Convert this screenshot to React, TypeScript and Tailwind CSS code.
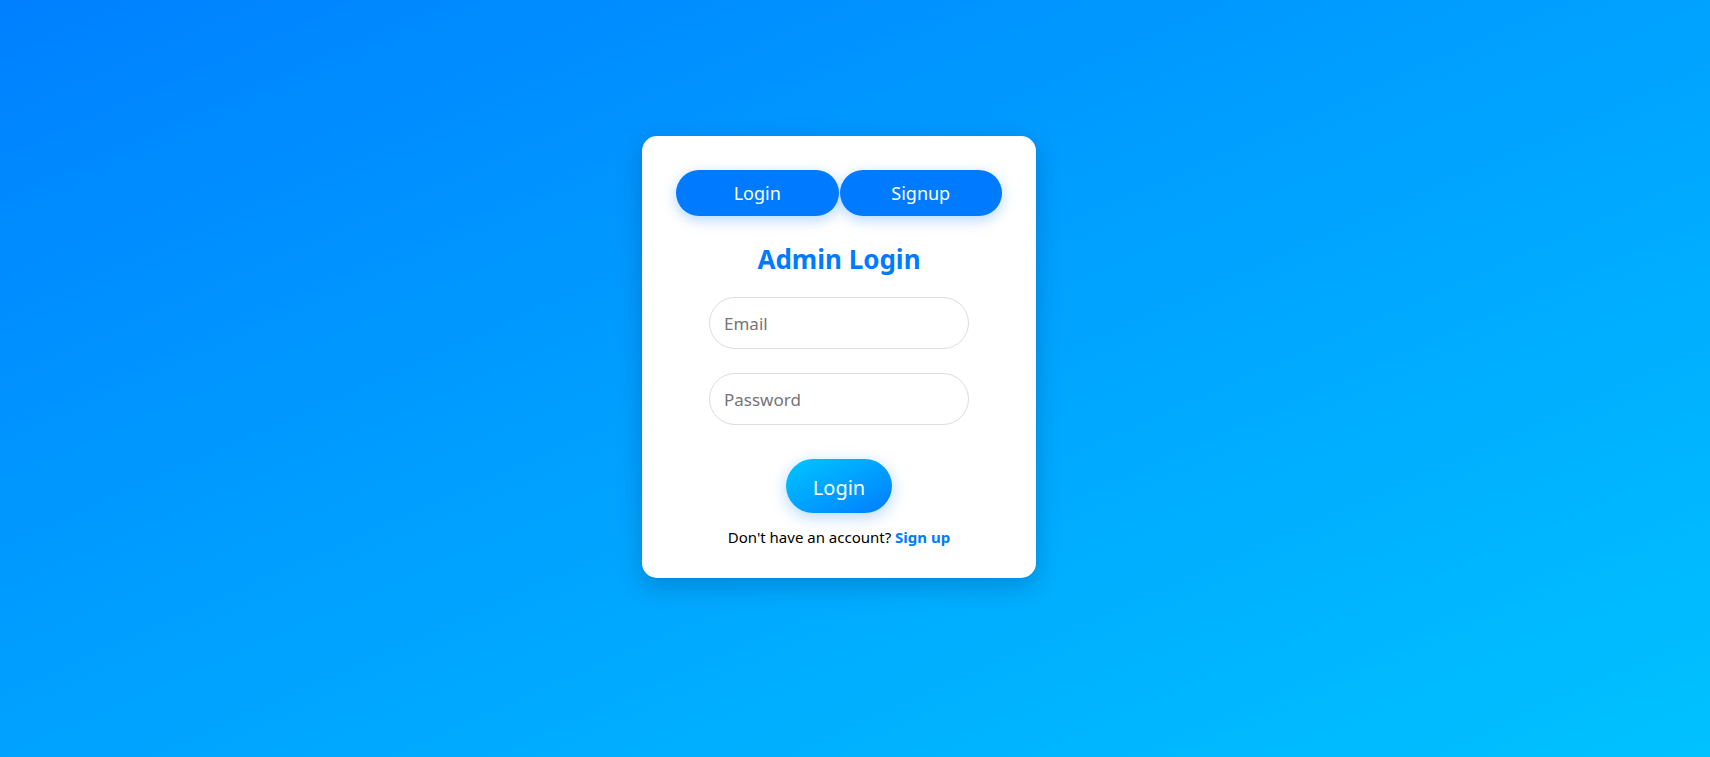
export default function App() {
  return (
    <div
      className="min-h-screen w-full flex items-center justify-center bg-gradient-to-br from-[#0080ff] to-[#00c2ff] pr-[32px] pb-[43px]"
      style={{ fontFamily: '"Noto Sans", "Open Sans", sans-serif' }}
    >
      {/* card */}
      <div className="w-[394px] h-[442px] bg-white rounded-[15px] shadow-[0_8px_24px_rgba(0,40,90,0.25)] px-[34px] pt-[34px] flex flex-col items-center">
        <div className="flex w-full">
          <button className="flex-1 h-[46px] rounded-full bg-[#007bff] text-white text-[18px] shadow-[0_4px_14px_rgba(0,123,255,0.3)]">
            Login
          </button>
          <button className="flex-1 h-[46px] rounded-full bg-[#007bff] text-white text-[18px] shadow-[0_4px_14px_rgba(0,123,255,0.3)] ml-px">
            Signup
          </button>
        </div>

        <h2 className="mt-[23px] text-[26px] leading-[40px] font-bold text-[#007bff]">Admin Login</h2>

        <input
          type="email"
          placeholder="Email"
          className="mt-[18px] w-[260px] h-[52px] rounded-full border border-[#dddddd] px-[14px] text-[17px] placeholder:text-[#757575] outline-none"
        />
        <input
          type="password"
          placeholder="Password"
          className="mt-[24px] w-[260px] h-[52px] rounded-full border border-[#dddddd] px-[14px] text-[17px] placeholder:text-[#757575] outline-none"
        />

        <button className="mt-[34px] w-[106px] h-[54px] rounded-full bg-gradient-to-br from-[#00c6ff] to-[#007bff] text-white text-[20px] pt-[3px] shadow-[0_4px_16px_rgba(0,123,255,0.3)]">
          Login
        </button>

        <p className="mt-[13px] text-[15px] text-black">
          Don't have an account? <a className="text-[#007bff] font-bold">Sign up</a>
        </p>
      </div>
    </div>
  )
}
